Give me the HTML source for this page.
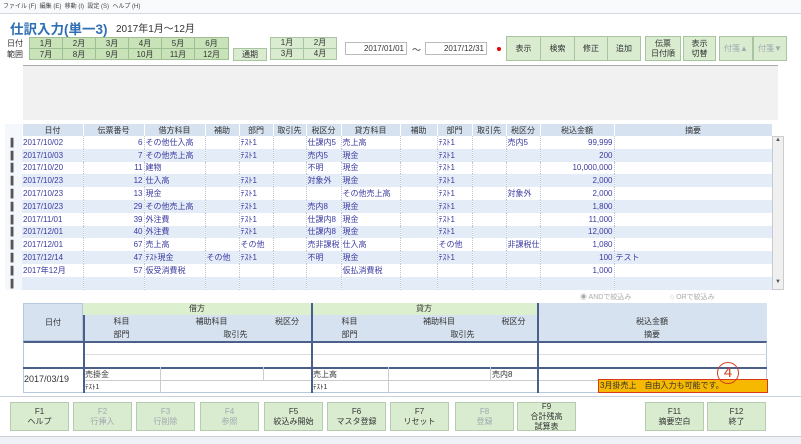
<!DOCTYPE html>
<html><head><meta charset="utf-8"><style>
*{box-sizing:border-box;margin:0;padding:0}
body{width:801px;height:444px;overflow:hidden;background:#f4f7fb;font-family:"Liberation Sans","Noto Sans CJK JP",sans-serif;font-size:9px;color:#333;position:relative}
.a{position:absolute}
.btn{position:absolute;background:#d9ecd0;border:1px solid #a9c4a0;display:flex;align-items:center;justify-content:center;text-align:center;font-size:8px;line-height:10px;color:#333}
.mb{position:absolute;background:#c8e3b8;border:1px solid #9fbf92;display:flex;align-items:center;justify-content:center;font-size:8px}
table{border-collapse:collapse;position:absolute;table-layout:fixed}
td{height:12.8px;border-right:1px dotted #bcc8d8;font-size:8px;line-height:11px;padding:0 1px;white-space:nowrap;overflow:hidden;color:#3a3aa0}
th{height:12px;background:#d6e2f0;border-right:1px solid #fff;font-weight:normal;font-size:8px;color:#333}
tr.o td{background:#fff}
tr.e td{background:#e4ecf7}
td.r{text-align:right}
td.k{color:#555;background:#f4f7fb!important;text-align:center;border:none}
.f{position:absolute;background:#d9ecd0;border:1px solid #b6ccae;display:flex;align-items:center;justify-content:center;text-align:center;font-size:8px;line-height:10px;color:#333;top:402px;height:29px;width:59px}
.dis{color:#a0a8b0 !important}
</style></head><body>
<div class="a" style="left:0;top:0;width:801px;height:14px;background:#f9fafc;border-bottom:1px solid #cfd8e3;font-size:6px;line-height:14px;padding-left:3px;color:#444">ファイル (F)&nbsp; 編集 (E)&nbsp; 移動 (I)&nbsp; 設定 (S)&nbsp; ヘルプ (H)</div>
<div class="a" style="left:0;top:14px;width:801px;height:430px;background:#fff;"></div>
<div class="a" style="left:10px;top:18px;font-size:13.5px;font-weight:bold;color:#2f6fb5">仕訳入力(単一3)</div>
<div class="a" style="left:116px;top:20px;font-size:10px;color:#333">2017年1月～12月</div>
<div class="a" style="left:7px;top:38px;font-size:8px;line-height:11px">日付<br>範囲</div>
<div class="mb" style="left:29px;top:37px;width:34px;height:12px">1月</div><div class="mb" style="left:62px;top:37px;width:34px;height:12px">2月</div><div class="mb" style="left:95px;top:37px;width:34px;height:12px">3月</div><div class="mb" style="left:128px;top:37px;width:34px;height:12px">4月</div><div class="mb" style="left:161px;top:37px;width:34px;height:12px">5月</div><div class="mb" style="left:194px;top:37px;width:35px;height:12px">6月</div>
<div class="mb" style="left:29px;top:48px;width:34px;height:12px">7月</div><div class="mb" style="left:62px;top:48px;width:34px;height:12px">8月</div><div class="mb" style="left:95px;top:48px;width:34px;height:12px">9月</div><div class="mb" style="left:128px;top:48px;width:34px;height:12px">10月</div><div class="mb" style="left:161px;top:48px;width:34px;height:12px">11月</div><div class="mb" style="left:194px;top:48px;width:35px;height:12px">12月</div>
<div class="btn" style="left:233px;top:48px;width:34px;height:13px">通期</div>
<div class="btn" style="left:270px;top:37px;width:34px;height:12px">1月</div><div class="btn" style="left:303px;top:37px;width:34px;height:12px">2月</div>
<div class="btn" style="left:270px;top:48px;width:34px;height:12px">3月</div><div class="btn" style="left:303px;top:48px;width:34px;height:12px">4月</div>
<div class="a" style="left:345px;top:42px;width:62px;height:13px;border:1px solid #bbb;background:#fff;text-align:right;font-size:8px;line-height:11px;padding-right:2px">2017/01/01</div>
<div class="a" style="left:412px;top:43px;font-size:9px">～</div>
<div class="a" style="left:425px;top:42px;width:62px;height:13px;border:1px solid #bbb;background:#fff;text-align:right;font-size:8px;line-height:11px;padding-right:2px">2017/12/31</div>
<div class="a" style="left:497px;top:47px;width:4px;height:4px;border-radius:2px;background:#e00"></div>
<div class="btn" style="left:506px;top:36px;width:35px;height:25px">表示</div><div class="btn" style="left:540px;top:36px;width:35px;height:25px">検索</div><div class="btn" style="left:574px;top:36px;width:34px;height:25px">修正</div><div class="btn" style="left:607px;top:36px;width:34px;height:25px">追加</div>
<div class="btn" style="left:645px;top:36px;width:36px;height:25px">伝票<br>日付順</div><div class="btn" style="left:683px;top:36px;width:33px;height:25px">表示<br>切替</div>
<div class="btn dis" style="left:719px;top:36px;width:34px;height:25px">付箋▲</div><div class="btn dis" style="left:753px;top:36px;width:34px;height:25px">付箋▼</div>
<div class="a" style="left:23px;top:65px;width:755px;height:55px;background:#f1f1f1;border-top:1px solid #aaa"></div>
<div class="a" style="left:772px;top:136px;width:12px;height:154px;background:#f0f0f0;border:1px solid #ccc;font-size:6px;text-align:center;color:#555">▲<div style="position:absolute;top:142px;width:10px">▼</div></div>
<table style="left:5px;top:124px;width:767px">
<colgroup><col style="width:17px"><col style="width:61px"><col style="width:61px"><col style="width:61px"><col style="width:34px"><col style="width:34px"><col style="width:33px"><col style="width:35px"><col style="width:59px"><col style="width:37px"><col style="width:35px"><col style="width:34px"><col style="width:34px"><col style="width:74px"><col style="width:158px"></colgroup>
<tr><th style="background:#f4f7fb"></th><th>日付</th><th>伝票番号</th><th>借方科目</th><th>補助</th><th>部門</th><th>取引先</th><th>税区分</th><th>貸方科目</th><th>補助</th><th>部門</th><th>取引先</th><th>税区分</th><th>税込金額</th><th>摘要</th></tr>
<tr class="o"><td class="k">▌</td><td>2017/10/02</td><td class="r">6</td><td>その他仕入高</td><td></td><td>ﾃｽﾄ1</td><td></td><td>仕課内5</td><td>売上高</td><td></td><td>ﾃｽﾄ1</td><td></td><td>売内5</td><td class="r">99,999</td><td></td></tr>
<tr class="e"><td class="k">▌</td><td>2017/10/03</td><td class="r">7</td><td>その他売上高</td><td></td><td>ﾃｽﾄ1</td><td></td><td>売内5</td><td>現金</td><td></td><td>ﾃｽﾄ1</td><td></td><td></td><td class="r">200</td><td></td></tr>
<tr class="o"><td class="k">▌</td><td>2017/10/20</td><td class="r">11</td><td>建物</td><td></td><td></td><td></td><td>不明</td><td>現金</td><td></td><td>ﾃｽﾄ1</td><td></td><td></td><td class="r">10,000,000</td><td></td></tr>
<tr class="e"><td class="k">▌</td><td>2017/10/23</td><td class="r">12</td><td>仕入高</td><td></td><td>ﾃｽﾄ1</td><td></td><td>対象外</td><td>現金</td><td></td><td>ﾃｽﾄ1</td><td></td><td></td><td class="r">2,000</td><td></td></tr>
<tr class="o"><td class="k">▌</td><td>2017/10/23</td><td class="r">13</td><td>現金</td><td></td><td>ﾃｽﾄ1</td><td></td><td></td><td>その他売上高</td><td></td><td>ﾃｽﾄ1</td><td></td><td>対象外</td><td class="r">2,000</td><td></td></tr>
<tr class="e"><td class="k">▌</td><td>2017/10/23</td><td class="r">29</td><td>その他売上高</td><td></td><td>ﾃｽﾄ1</td><td></td><td>売内8</td><td>現金</td><td></td><td>ﾃｽﾄ1</td><td></td><td></td><td class="r">1,800</td><td></td></tr>
<tr class="o"><td class="k">▌</td><td>2017/11/01</td><td class="r">39</td><td>外注費</td><td></td><td>ﾃｽﾄ1</td><td></td><td>仕課内8</td><td>現金</td><td></td><td>ﾃｽﾄ1</td><td></td><td></td><td class="r">11,000</td><td></td></tr>
<tr class="e"><td class="k">▌</td><td>2017/12/01</td><td class="r">40</td><td>外注費</td><td></td><td>ﾃｽﾄ1</td><td></td><td>仕課内8</td><td>現金</td><td></td><td>ﾃｽﾄ1</td><td></td><td></td><td class="r">12,000</td><td></td></tr>
<tr class="o"><td class="k">▌</td><td>2017/12/01</td><td class="r">67</td><td>売上高</td><td></td><td>その他</td><td></td><td>売非課税</td><td>仕入高</td><td></td><td>その他</td><td></td><td>非課税仕</td><td class="r">1,080</td><td></td></tr>
<tr class="e"><td class="k">▌</td><td>2017/12/14</td><td class="r">47</td><td>ﾃｽﾄ現金</td><td>その他</td><td>ﾃｽﾄ1</td><td></td><td>不明</td><td>現金</td><td></td><td>ﾃｽﾄ1</td><td></td><td></td><td class="r">100</td><td>テスト</td></tr>
<tr class="o"><td class="k">▌</td><td>2017年12月</td><td class="r">57</td><td>仮受消費税</td><td></td><td></td><td></td><td></td><td>仮払消費税</td><td></td><td></td><td></td><td></td><td class="r">1,000</td><td></td></tr>
<tr class="e"><td class="k">▌</td><td></td><td></td><td></td><td></td><td></td><td></td><td></td><td></td><td></td><td></td><td></td><td></td><td></td><td></td></tr>
</table>
<div class="a" style="left:580px;top:292px;font-size:7px;color:#aaa">◉ ANDで絞込み</div>
<div class="a" style="left:670px;top:292px;font-size:7px;color:#aaa">○ ORで絞込み</div>
<div class="a" style="left:23px;top:303px;width:60px;height:38px;background:#d6e2f0;border:1px solid #b8c8dc;display:flex;align-items:center;justify-content:center;font-size:8px">日付</div>
<div class="a" style="left:83px;top:303px;width:228px;height:12px;background:#dcefcf;text-align:center;font-size:8px;line-height:12px">借方</div>
<div class="a" style="left:311px;top:303px;width:226px;height:12px;background:#dcefcf;text-align:center;font-size:8px;line-height:12px">貸方</div>
<div class="a" style="left:537px;top:303px;width:230px;height:12px;background:#d6e2f0"></div>
<div class="a" style="left:83px;top:315px;width:684px;height:26px;background:#d6e2f0"></div>
<div class="a" style="left:83px;top:316px;width:77px;text-align:center;font-size:8px">科目</div>
<div class="a" style="left:160px;top:316px;width:103px;text-align:center;font-size:8px">補助科目</div>
<div class="a" style="left:263px;top:316px;width:48px;text-align:center;font-size:8px">税区分</div>
<div class="a" style="left:83px;top:329px;width:77px;text-align:center;font-size:8px">部門</div>
<div class="a" style="left:160px;top:329px;width:151px;text-align:center;font-size:8px">取引先</div>
<div class="a" style="left:311px;top:316px;width:77px;text-align:center;font-size:8px">科目</div>
<div class="a" style="left:388px;top:316px;width:102px;text-align:center;font-size:8px">補助科目</div>
<div class="a" style="left:490px;top:316px;width:47px;text-align:center;font-size:8px">税区分</div>
<div class="a" style="left:311px;top:329px;width:77px;text-align:center;font-size:8px">部門</div>
<div class="a" style="left:388px;top:329px;width:149px;text-align:center;font-size:8px">取引先</div>
<div class="a" style="left:537px;top:316px;width:230px;text-align:center;font-size:8px">税込金額</div>
<div class="a" style="left:537px;top:329px;width:230px;text-align:center;font-size:8px">摘要</div>
<div class="a" style="left:23px;top:341px;width:744px;height:52px;background:#fff;border:1px solid #b8c8dc;border-top:2px solid #4a5f8a"></div>
<div class="a" style="left:83px;top:354px;width:684px;border-top:1px solid #ddd"></div>
<div class="a" style="left:23px;top:367px;width:744px;border-top:2px solid #4a5f8a"></div>
<div class="a" style="left:83px;top:380px;width:684px;border-top:1px solid #ccc"></div>
<div class="a" style="left:83px;top:315px;height:78px;border-left:2px solid #4a5f8a"></div>
<div class="a" style="left:311px;top:303px;height:90px;border-left:2px solid #4a5f8a"></div>
<div class="a" style="left:537px;top:303px;height:90px;border-left:2px solid #4a5f8a"></div>
<div class="a" style="left:160px;top:367px;height:26px;border-left:1px solid #ccc"></div>
<div class="a" style="left:263px;top:367px;height:13px;border-left:1px solid #ccc"></div>
<div class="a" style="left:388px;top:367px;height:26px;border-left:1px solid #ccc"></div>
<div class="a" style="left:490px;top:367px;height:13px;border-left:1px solid #ccc"></div>
<div class="a" style="left:24px;top:374px;font-size:9px">2017/03/19</div>
<div class="a" style="left:85px;top:369px;font-size:8px">売掛金</div>
<div class="a" style="left:85px;top:382px;font-size:7px">ﾃｽﾄ1</div>
<div class="a" style="left:313px;top:369px;font-size:8px">売上高</div>
<div class="a" style="left:313px;top:382px;font-size:7px">ﾃｽﾄ1</div>
<div class="a" style="left:492px;top:369px;font-size:8px">売内8</div>
<div class="a" style="left:598px;top:379px;width:170px;height:14px;background:#f7b800;border:1px solid #d63a1a;font-size:8px;line-height:12px;padding-left:1px;color:#333">3月掛売上　自由入力も可能です。</div>
<div class="a" style="left:717px;top:362px;width:22px;height:22px;border:1px solid #d04020;border-radius:50%;color:#d04020;font-size:15px;line-height:20px;text-align:center">4</div>
<div class="a" style="left:0;top:396px;width:801px;border-top:1px solid #c8d0da"></div>
<div class="f" style="left:10px">F1<br>ヘルプ</div>
<div class="f dis" style="left:73px">F2<br>行挿入</div>
<div class="f dis" style="left:136px">F3<br>行削除</div>
<div class="f dis" style="left:200px">F4<br>参照</div>
<div class="f" style="left:264px">F5<br>絞込み開始</div>
<div class="f" style="left:327px">F6<br>マスタ登録</div>
<div class="f" style="left:390px">F7<br>リセット</div>
<div class="f dis" style="left:455px">F8<br>登録</div>
<div class="f" style="left:517px">F9<br>合計残高<br>試算表</div>
<div class="f" style="left:645px">F11<br>摘要空白</div>
<div class="f" style="left:707px">F12<br>終了</div>
<div class="a" style="left:0;top:436px;width:801px;height:8px;background:#eef2f7;border-top:1px solid #c8d0da"></div>
</body></html>
